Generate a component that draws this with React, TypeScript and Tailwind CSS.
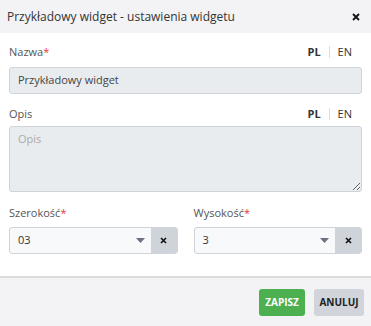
function Req() {
  return <span className="text-[#e53935]">*</span>;
}

function LangSwitch() {
  return (
    <div className="flex items-center text-[11px] text-[#333]">
      <span className="font-bold">PL</span>
      <span className="mx-[8px] h-[12px] w-px bg-[#ddd]" />
      <span>EN</span>
    </div>
  );
}

function SelectBox({ value }: { value: string }) {
  return (
    <div className="flex h-[27px] overflow-hidden rounded-[3px] border border-[#ced4da] bg-[#f8f9fa]">
      <div className="flex flex-1 items-center pl-[8px] text-[11px] text-[#333]">{value}</div>
      <div className="flex items-center pr-[6px]">
        <svg width="9" height="5" viewBox="0 0 9 5">
          <path d="M0 0h9L4.5 5z" fill="#6b7280" />
        </svg>
      </div>
      <div className="flex w-[26px] items-center justify-center bg-[#ced4da]">
        <svg width="7" height="7" viewBox="0 0 7 7">
          <path d="M1 1l5 5M6 1l-5 5" stroke="#111" strokeWidth="1.6" />
        </svg>
      </div>
    </div>
  );
}

export default function App() {
  return (
    <div className="flex h-[326px] w-[371px] flex-col bg-white font-['Open_Sans',sans-serif] text-[#333]">
      <header className="flex h-[33px] items-center justify-between bg-[#f3f3f5] pl-[7px] pr-[11px]">
        <h1 className="text-[12px]">Przykładowy widget - ustawienia widgetu</h1>
        <svg width="8" height="8" viewBox="0 0 8 8">
          <path d="M1 1l6 6M7 1l-6 6" stroke="#111" strokeWidth="1.8" />
        </svg>
      </header>

      <main className="flex flex-1 flex-col px-[9px] pt-[11px]">
        <div className="flex items-center justify-between pr-[10px]">
          <label className="text-[11px] text-[#555]">
            Nazwa<Req />
          </label>
          <LangSwitch />
        </div>
        <div className="mt-[6px] flex h-[27px] items-center rounded-[3px] border border-[#ced4da] bg-[#e9ecef] pl-[8px] text-[11px] text-[#444]">
          Przykładowy widget
        </div>

        <div className="mt-[12px] flex items-center justify-between pr-[10px]">
          <label className="text-[11px] text-[#555]">Opis</label>
          <LangSwitch />
        </div>
        <textarea
          placeholder="Opis"
          className="mt-[4px] h-[66px] resize-y rounded-[3px] border border-[#ced4da] bg-[#e9ecef] px-[8px] py-[4px] text-[11px] placeholder:text-[#aaa]"
        />

        <div className="mt-[7px] grid grid-cols-2 gap-[16px]">
          <div>
            <label className="text-[11px] text-[#555]">
              Szerokość<Req />
            </label>
            <div className="mt-[4px]">
              <SelectBox value="03" />
            </div>
          </div>
          <div>
            <label className="text-[11px] text-[#555]">
              Wysokość<Req />
            </label>
            <div className="mt-[4px]">
              <SelectBox value="3" />
            </div>
          </div>
        </div>
      </main>

      <footer className="flex h-[50px] items-center justify-end gap-[9px] border-t-2 border-[#dcdcdc] bg-[#f3f3f5] pr-[7px]">
        <button className="h-[27px] w-[46px] rounded-[3px] bg-[#4caf50] text-[10px] font-bold text-white">ZAPISZ</button>
        <button className="h-[27px] w-[50px] rounded-[3px] bg-[#d1d5db] text-[10px] font-bold text-[#222]">ANULUJ</button>
      </footer>
    </div>
  );
}
